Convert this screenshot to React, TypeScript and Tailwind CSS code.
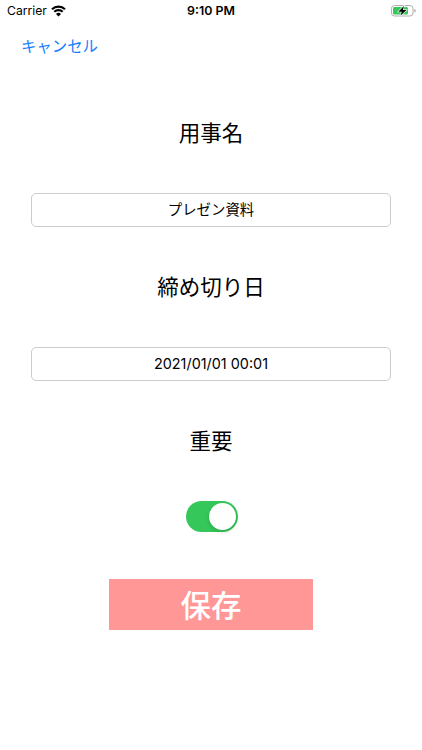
type FieldProps = {
  label: string;
  value: string;
};

const WifiIcon = () => (
  <svg width="15" height="12" viewBox="0 0 15 12">
    <path
      d="M1 4.3a9.2 9.2 0 0 1 13 0M3.3 6.8a6 6 0 0 1 8.4 0"
      fill="none"
      stroke="#000"
      strokeWidth="2.1"
    />
    <path d="M7.5 11.4 5 8.9a3.6 3.6 0 0 1 5 0z" />
  </svg>
);

const BatteryIcon = () => (
  <svg width="26" height="12" viewBox="0 0 26 12">
    <rect
      x="0.5"
      y="0.5"
      width="21.5"
      height="10.5"
      rx="3"
      fill="none"
      stroke="#b0b0b0"
    />
    <path d="M23.4 4v3.6c.9-.3 1.3-1 1.3-1.8s-.4-1.5-1.3-1.8z" fill="#a0a0a0" />
    <rect x="2" y="2" width="15" height="7.5" rx="1.5" fill="#35c759" />
    <path
      d="M12.9 1 7.3 6.7h3.5L9.4 10.8l6-5.8H12z"
      stroke="#fff"
      strokeWidth="1.2"
      paintOrder="stroke"
    />
  </svg>
);

const Field = ({ label, value }: FieldProps) => (
  <div className="flex h-[154px] w-full flex-col items-center">
    <h2 className="h-8 text-[21.5px] leading-8">{label}</h2>
    <div className="mt-11 flex h-[34px] w-[360px] items-center justify-center rounded-[5px] border border-[#cccccc] pb-px text-[14.4px]">
      {value}
    </div>
  </div>
);

const App = () => {
  return (
    <div className="flex h-[750px] w-[422px] flex-col items-center bg-white font-['Inter','Noto_Sans_CJK_JP',sans-serif] text-black">
      <div className="grid h-[22px] w-full grid-cols-3 items-center pr-[5px] pl-[7px] text-[12.2px]">
        <div className="flex items-center gap-[4px]">
          <span>Carrier</span>
          <WifiIcon />
        </div>
        <span className="pr-[2px] text-center text-[12.4px] font-semibold">
          9:10 PM
        </span>
        <div className="flex justify-end">
          <BatteryIcon />
        </div>
      </div>
      <div className="flex h-[50px] w-full items-center px-[21px]">
        <button className="text-[15.4px] text-[#147efb]">キャンセル</button>
      </div>
      <div className="mt-[45px] flex w-full flex-col items-center">
        <Field label="用事名" value="プレゼン資料" />
        <Field label="締め切り日" value="2021/01/01 00:01" />
        <h2 className="h-8 text-[21.5px] leading-8">重要</h2>
        <button className="mt-11 ml-[2px] flex h-[31px] w-[52px] items-center justify-end rounded-full bg-[#35c759] p-[2px]">
          <span className="size-[27px] rounded-full bg-white shadow-[0_2px_4px_rgba(0,0,0,0.15)]" />
        </button>
        <button className="mt-[47px] flex h-[51px] w-[204px] items-center justify-center bg-[#ff9797] pt-[3px] text-[30.5px] font-medium text-white">
          保存
        </button>
      </div>
    </div>
  );
};

export default App;
